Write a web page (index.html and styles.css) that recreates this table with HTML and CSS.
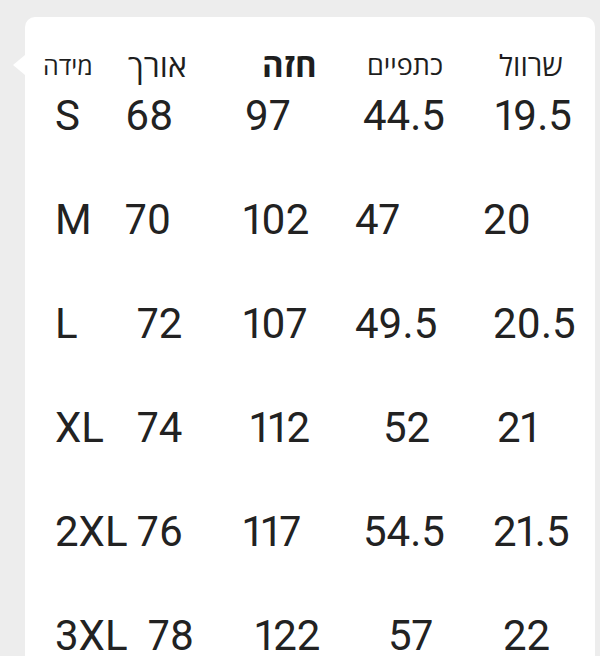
FILE: index.html
```html
<!DOCTYPE html>
<html lang="he">
<head>
<meta charset="utf-8">
<title>טבלת מידות</title>
<link rel="stylesheet" href="styles.css">
</head>
<body>
<div class="card">
  <div class="cols head">
    <div class="h h-size">מידה</div>
    <div class="h h-len o3">אורך</div>
    <div class="h h-chest o19">חזה</div>
    <div class="h h-shoulder o12">כתפיים</div>
    <div class="h h-sleeve o16">שרוול</div>
  </div>
  <div class="cols rows">
    <div class="c sz">S</div><div class="c">68</div><div class="c o2">97</div><div class="c o8">44.5</div><div class="c o12">19.5</div>
    <div class="c sz">M</div><div class="c">70</div><div class="c">102</div><div class="c">47</div><div class="c">20</div>
    <div class="c sz">L</div><div class="c o12">72</div><div class="c">107</div><div class="c">49.5</div><div class="c o10">20.5</div>
    <div class="c sz">XL</div><div class="c o12">74</div><div class="c o7">112</div><div class="c o28">52</div><div class="c o14">21</div>
    <div class="c sz">2XL</div><div class="c o12">76</div><div class="c">117</div><div class="c o8">54.5</div><div class="c o10">21.5</div>
    <div class="c sz">3XL</div><div class="c o23">78</div><div class="c o12">122</div><div class="c o33">57</div><div class="c o20">22</div>
  </div>
</div>
</body>
</html>
```

FILE: styles.css
```css
html, body {
  margin: 0;
  padding: 0;
  height: 656px;
  overflow: hidden;
}
body {
  background: #ededed;
  font-family: Roboto, "Open Sans", "Liberation Sans", sans-serif;
  color: #222;
}
.card {
  position: relative;
  margin: 17px 0 0 25px;
  width: 570px;
  height: 720px;
  background: #fff;
  border-radius: 10px;
  box-sizing: border-box;
  padding: 33px 0 0 18px;
}
.card::before {
  content: "";
  position: absolute;
  left: -12px;
  top: 38px;
  border-top: 10px solid transparent;
  border-bottom: 10px solid transparent;
  border-right: 12px solid #fff;
}
.cols {
  display: grid;
  grid-template-columns: 82px 118px 112px 128px 112px;
}
.head {
  height: 30px;
  line-height: 30px;
  align-items: end;
  font-family: "Open Sans", "Liberation Sans", "DejaVu Sans", sans-serif;
  color: #1e1e1e;
}
.h { white-space: nowrap; }
.h-size { font-size: 25px; }
.h-len { font-size: 32px; }
.h-chest { font-size: 33px; font-weight: 700; }
.h-shoulder { font-size: 27px; }
.h-sleeve { font-size: 29px; }
.rows {
  margin-top: 11px;
  row-gap: 54px;
  font-size: 42px;
  line-height: 50px;
  font-variant-numeric: proportional-nums;
}
.c { white-space: nowrap; }
.sz { padding-left: 12px; }
.o2 { padding-left: 2px; }
.o3 { padding-left: 3px; }
.o7 { padding-left: 7px; }
.o8 { padding-left: 8px; }
.o10 { padding-left: 10px; }
.o12 { padding-left: 12px; }
.o14 { padding-left: 14px; }
.o16 { padding-left: 16px; }
.o19 { padding-left: 19px; }
.o20 { padding-left: 20px; }
.o23 { padding-left: 23px; }
.o28 { padding-left: 28px; }
.o33 { padding-left: 33px; }
```
